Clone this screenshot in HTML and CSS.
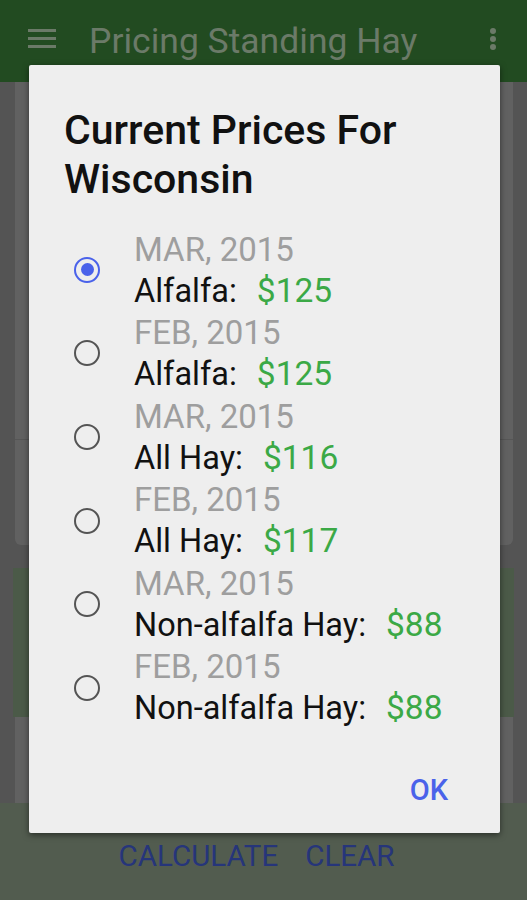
FILE: index.html
```html
<!DOCTYPE html>
<html lang="en">
<head>
<meta charset="UTF-8">
<meta name="viewport" content="width=device-width, initial-scale=1.0">
<title>Pricing Standing Hay</title>
<link rel="stylesheet" href="styles.css">
</head>
<body>
<div class="screen">
    <div class="appbar">
        <svg class="menu-icon" width="28" height="20" viewBox="0 0 28 20">
            <rect x="0" y="0" width="28" height="3" />
            <rect x="0" y="8" width="28" height="3" />
            <rect x="0" y="16" width="28" height="3" />
        </svg>
        <span class="app-title">Pricing Standing Hay</span>
        <svg class="more-icon" width="8" height="24" viewBox="0 0 8 24">
            <circle cx="4" cy="4" r="3" />
            <circle cx="4" cy="12" r="3" />
            <circle cx="4" cy="20" r="3" />
        </svg>
    </div>

    <div class="content">
        <div class="card card-top">
            <div class="card-part tall"></div>
            <div class="card-part short"></div>
        </div>
        <div class="panel-green"></div>
        <div class="card card-low"></div>
    </div>

    <div class="actions">
        <span>CALCULATE</span>
        <span>CLEAR</span>
    </div>

    <!-- dialog sits on top of the dimmed screen -->
    <div class="dialog">
        <h2 class="dialog-title">Current Prices For Wisconsin</h2>
        <div class="price-list">
            <div class="price-item">
                <span class="radio checked"></span>
                <div class="price-text">
                    <div class="date">MAR, 2015</div>
                    <div class="label">Alfalfa:<span class="price">$125</span></div>
                </div>
            </div>
            <div class="price-item">
                <span class="radio"></span>
                <div class="price-text">
                    <div class="date">FEB, 2015</div>
                    <div class="label">Alfalfa:<span class="price">$125</span></div>
                </div>
            </div>
            <div class="price-item">
                <span class="radio"></span>
                <div class="price-text">
                    <div class="date">MAR, 2015</div>
                    <div class="label">All Hay:<span class="price">$116</span></div>
                </div>
            </div>
            <div class="price-item">
                <span class="radio"></span>
                <div class="price-text">
                    <div class="date">FEB, 2015</div>
                    <div class="label">All Hay:<span class="price">$117</span></div>
                </div>
            </div>
            <div class="price-item">
                <span class="radio"></span>
                <div class="price-text">
                    <div class="date">MAR, 2015</div>
                    <div class="label">Non-alfalfa Hay:<span class="price">$88</span></div>
                </div>
            </div>
            <div class="price-item">
                <span class="radio"></span>
                <div class="price-text">
                    <div class="date">FEB, 2015</div>
                    <div class="label">Non-alfalfa Hay:<span class="price">$88</span></div>
                </div>
            </div>
        </div>
        <div class="dialog-buttons">
            <button class="ok-button">OK</button>
        </div>
    </div>
</div>
</body>
</html>
```

FILE: styles.css
```css
body {
    margin: 0;
    padding: 0;
    font-family: Roboto, "Noto Sans", sans-serif;
    background-color: #545454;
}

.screen {
    position: relative;
    width: 527px;
    height: 900px;
    overflow: hidden;
    background-color: #545454;
}

/* app bar, already dimmed by the dialog scrim */
.appbar {
    height: 82px;
    background-color: #224b21;
    display: flex;
    align-items: center;
    padding: 0 30px 0 28px;
    box-sizing: border-box;
}

.menu-icon {
    fill: #6b7a68;
    margin-top: -4px;
}

.app-title {
    flex: 1;
    margin-left: 33px;
    margin-top: 0;
    font-size: 35.5px;
    color: #6b7a68;
}

.more-icon {
    fill: #6b7a68;
    margin-top: -4px;
}

.content {
    padding: 0 14px 0 15px;
}

.card {
    background-color: #616161;
}

.card-top {
    border-radius: 0 0 6px 6px;
    overflow: hidden;
}

.card-part.tall {
    height: 357px;
    border-bottom: 1px solid #565656;
}

.card-part.short {
    height: 105px;
}

.panel-green {
    margin: 23px -1px 0 -2px;
    height: 149px;
    background-color: #4b5a48;
}

.card-low {
    height: 86px;
}

.actions {
    background-color: #525c4f;
    height: 97px;
    display: flex;
    justify-content: center;
    gap: 27px;
    padding: 36px 14px 0 0;
    box-sizing: border-box;
    font-size: 29.5px;
    color: #26357a;
}

/* dialog */
.dialog {
    position: absolute;
    left: 29px;
    top: 65px;
    width: 471px;
    height: 768px;
    background-color: #eeeeee;
    border-radius: 2px;
    box-shadow: 0 2px 6px rgba(0, 0, 0, 0.5);
    box-sizing: border-box;
    padding: 41px 0 0 35px;
}

.dialog-title {
    margin: 0;
    width: 400px;
    font-size: 41px;
    font-weight: 500;
    line-height: 49px;
    color: #111111;
}

.price-list {
    margin-top: 24px;
}

.price-item {
    display: flex;
    align-items: center;
    height: 83.6px;
}

.radio {
    width: 22px;
    height: 22px;
    border: 2.5px solid #545454;
    border-radius: 50%;
    margin-left: 10px;
    margin-right: 34px;
    box-sizing: content-box;
    position: relative;
    flex-shrink: 0;
}

.radio.checked {
    border-color: #4a62ea;
}

.radio.checked::after {
    content: "";
    position: absolute;
    left: 4.5px;
    top: 4.5px;
    width: 13px;
    height: 13px;
    border-radius: 50%;
    background-color: #4a62ea;
}

.price-text {
    display: flex;
    flex-direction: column;
}

.date {
    padding-top: 2px;
    font-size: 33px;
    line-height: 40px;
    color: #9e9e9e;
}

.label {
    font-size: 32.5px;
    line-height: 41.6px;
    color: #111111;
}

.price {
    margin-left: 20px;
    font-size: 33.5px;
    color: #3ba946;
}

.dialog-buttons {
    display: flex;
    justify-content: flex-end;
    padding: 39px 40px 0 0;
}

.ok-button {
    background: none;
    border: none;
    padding: 4px 12px;
    font-family: Roboto, "Noto Sans", sans-serif;
    font-size: 29px;
    font-weight: 500;
    color: #4a62ea;
}
```
